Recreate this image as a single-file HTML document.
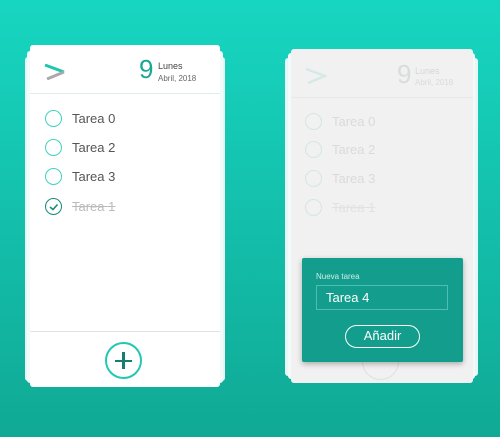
<!DOCTYPE html>
<html><head><style>
*{margin:0;padding:0;box-sizing:border-box}
body{width:500px;height:437px;overflow:hidden;background:linear-gradient(#17d6c1,#10a995);font-family:"Liberation Sans",sans-serif;position:relative}
.a{position:absolute}
.l1{background:#e6f7f5;border-radius:3px}
.l2{background:#f2fbfa;border-radius:3px}
.card{background:#fff;border-radius:3px}
.t{position:absolute;font-size:13px;color:#555}
.c{position:absolute;width:17px;height:17px;border:1.5px solid #3fd3bf;border-radius:50%}
</style></head><body>
<!-- left -->
<div class="a l1" style="left:25px;top:57px;width:200px;height:324px"></div>
<div class="a l2" style="left:27px;top:51px;width:196px;height:332px"></div>
<div class="a card" style="left:30px;top:45px;width:190px;height:342px"></div>
<svg class="a" style="left:44px;top:64px" width="22" height="16"><path d="M1 1 L20 8" stroke="#1fc7b0" stroke-width="3"/><path d="M3 15 L20 8" stroke="#aaa" stroke-width="3"/></svg>
<div class="a" style="left:139px;top:54px;font-size:26px;color:#1aa895">9</div>
<div class="a" style="left:158px;top:61px;font-size:9px;color:#444">Lunes</div>
<div class="a" style="left:158px;top:74px;font-size:8px;color:#666">Abril, 2018</div>
<div class="a" style="left:30px;top:93px;width:190px;height:1px;background:#d8efec"></div>
<div class="c" style="left:45px;top:110px"></div><div class="t" style="left:72px;top:111px">Tarea 0</div>
<div class="c" style="left:45px;top:139px"></div><div class="t" style="left:72px;top:140px">Tarea 2</div>
<div class="c" style="left:45px;top:168px"></div><div class="t" style="left:72px;top:169px">Tarea 3</div>
<div class="c" style="left:45px;top:198px;border-color:#178c7d"></div>
<svg class="a" style="left:45px;top:198px" width="17" height="17"><path d="M5 9 L8 11.5 L12.5 6.5" stroke="#178c7d" stroke-width="1.6" fill="none"/></svg>
<div class="t" style="left:72px;top:199px;color:#bbb;text-decoration:line-through">Tarea 1</div>
<div class="a" style="left:30px;top:331px;width:190px;height:1px;background:#e2e2e2"></div>
<div class="a" style="left:105px;top:342px;width:37px;height:37px;border:2px solid #22c8b2;border-radius:50%"></div>
<div class="a" style="left:115px;top:359.5px;width:17px;height:2.5px;background:#177d70"></div>
<div class="a" style="left:122.3px;top:352px;width:2.5px;height:17px;background:#177d70"></div>
<!-- right -->
<div class="a l1" style="left:285px;top:58px;width:193px;height:318px"></div>
<div class="a l2" style="left:288px;top:53px;width:187px;height:326px"></div>
<div class="a" style="left:291px;top:49px;width:182px;height:334px;background:#f1f1f1;border-radius:3px"></div>
<svg class="a" style="left:305px;top:68px" width="22" height="16"><path d="M1 1 L20 8 L3 15" stroke="#d6e9e6" stroke-width="2.5" fill="none"/></svg>
<div class="a" style="left:397px;top:59px;font-size:26px;color:#d9dcdc">9</div>
<div class="a" style="left:415px;top:66px;font-size:9px;color:#d6d6d6">Lunes</div>
<div class="a" style="left:415px;top:78px;font-size:8px;color:#dadada">Abril, 2018</div>
<div class="a" style="left:291px;top:97px;width:182px;height:1px;background:#e8e8e8"></div>
<div class="c" style="left:305px;top:113px;border-color:#d3e6e3"></div><div class="t" style="left:332px;top:114px;color:#dadada">Tarea 0</div>
<div class="c" style="left:305px;top:141px;border-color:#d3e6e3"></div><div class="t" style="left:332px;top:142px;color:#dadada">Tarea 2</div>
<div class="c" style="left:305px;top:170px;border-color:#d3e6e3"></div><div class="t" style="left:332px;top:171px;color:#dadada">Tarea 3</div>
<div class="c" style="left:305px;top:199px;border-color:#d3e6e3"></div><div class="t" style="left:332px;top:200px;color:#e2e2e2;text-decoration:line-through">Tarea 1</div>
<div class="a" style="left:362px;top:343px;width:37px;height:37px;border:1.5px solid #e0e0e0;border-radius:50%"></div>
<div class="a" style="left:302px;top:258px;width:161px;height:104px;background:#139d8c;border-radius:2px;box-shadow:0 2px 6px rgba(0,0,0,.3)"></div>
<div class="a" style="left:316px;top:272px;font-size:8px;color:#cfeee9">Nueva tarea</div>
<div class="a" style="left:316px;top:285px;width:132px;height:25px;border:1px solid #4fbdb0"></div>
<div class="a" style="left:326px;top:290px;font-size:13px;color:#fff">Tarea 4</div>
<div class="a" style="left:345px;top:325px;width:75px;height:23px;border:1.5px solid #fff;border-radius:12px;color:#fff;font-size:13px;text-align:center;line-height:20px">Añadir</div>
</body></html>
